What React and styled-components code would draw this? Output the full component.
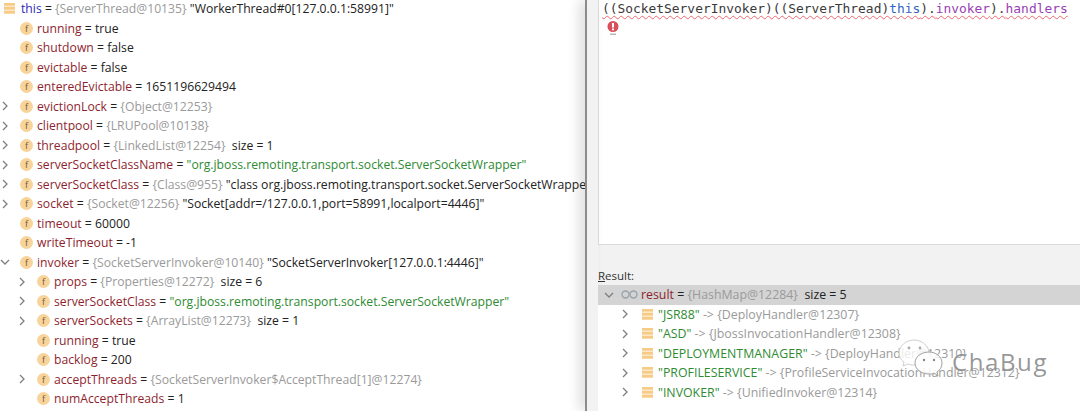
import React from "react";
import styled, { createGlobalStyle } from "styled-components";

const GlobalStyle = createGlobalStyle`
  html, body {
    margin: 0;
    padding: 0;
    background: #fff;
    overflow: hidden;
  }
`;

const Page = styled.div`
  display: flex;
  width: 1080px;
  height: 411px;
  overflow: hidden;
  font-family: "Open Sans", "Liberation Sans", sans-serif;
  font-size: 12.2px;
`;

const TreePane = styled.div`
  width: 585px;
  flex-shrink: 0;
  overflow: hidden;
  background: #fff;
  margin-top: -1px;
`;

const Divider = styled.div`
  position: relative;
  width: 13px;
  flex-shrink: 0;
  background: #f2f2f2;
  border-left: 2px solid #8c8c8c;
  box-sizing: border-box;
  box-shadow: -6px 0 12px rgba(0, 0, 0, 0.13);
`;

const RightPane = styled.div`
  flex: 1;
  min-width: 0;
  display: flex;
  flex-direction: column;
  background: #f2f2f2;
`;

const Editor = styled.div`
  height: 245px;
  flex-shrink: 0;
  box-sizing: border-box;
  background: #fff;
  border-bottom: 1px solid #dcdcdc;
  border-left: 1px solid #dcdcdc;
  padding: 0 0 0 3px;
  overflow: hidden;
`;

const Code = styled.div`
  font-family: "DejaVu Sans Mono", "Liberation Mono", monospace;
  font-size: 12.9px;
  line-height: 17px;
  white-space: nowrap;
  color: #3a3a3a;
  text-decoration: underline wavy #f0686c 1px;
  text-underline-offset: 2px;
`;

const CodeKeyword = styled.span`
  color: #3465c4;
`;

const CodeField = styled.span`
  color: #9a3fb5;
`;

const ErrorMark = styled.div`
  padding: 4px 0 0 5px;
`;

const ResultLabel = styled.div`
  font-size: 11.5px;
  line-height: 16px;
  height: 17px;
  margin-top: 23px;
  flex-shrink: 0;
  color: #333;
`;

const Underlined = styled.span`
  text-decoration: underline;
`;

const ResultList = styled.div`
  flex: 1;
  background: #fff;
  overflow: hidden;
  position: relative;
  font-size: 12.35px;
`;

const Row = styled.div`
  display: flex;
  align-items: center;
  height: 19.5px;
  padding-left: ${(props) => props.$indent}px;
  white-space: nowrap;
  background: ${(props) => (props.$selected ? "#d4d4d4" : "transparent")};
`;

const Chevron = styled.svg`
  width: 10px;
  height: 10px;
  flex-shrink: 0;
  fill: none;
  stroke: #7f7f7f;
  stroke-width: 1.3;
  visibility: ${(props) => (props.$hidden ? "hidden" : "visible")};
`;

const FieldIcon = styled.span`
  display: inline-flex;
  align-items: center;
  justify-content: center;
  width: 13px;
  height: 13px;
  margin: 0 4px 0 10px;
  flex-shrink: 0;
  border-radius: 50%;
  background: #f8d39a;
  color: #6d5a3c;
  font-size: 9px;
  line-height: 13px;
`;

const Name = styled.span`
  color: ${(props) => props.$color || "#8e1f2f"};
`;

const Text = styled.span`
  color: #222;
`;

const Muted = styled.span`
  color: #9a9a9a;
`;

const Str = styled.span`
  color: #2e8b32;
`;

const EntryIcon = styled.svg`
  width: 11px;
  height: 11px;
  margin: 0 5px 0 12px;
  flex-shrink: 0;
`;

const RootIcon = styled(EntryIcon)`
  margin: 0 6px 0 1px;
`;

const WatchIcon = styled.svg`
  width: 17px;
  height: 9px;
  margin: 0 3px 0 7px;
  flex-shrink: 0;
`;

const Watermark = styled.div`
  position: absolute;
  left: 300px;
  top: 54px;
  display: flex;
  align-items: flex-start;
  pointer-events: none;
`;

const WatermarkText = styled.span`
  margin: 8px 0 0 8px;
  font-size: 24px;
  line-height: 30px;
  letter-spacing: 1.6px;
  color: rgba(105, 105, 105, 0.7);
  text-shadow: 0 0 2px #fff;
`;

const Arrow = ({ open, hidden }) => (
  <Chevron viewBox="0 0 10 10" $hidden={hidden}>
    <path d={open ? "M1 3l4 4 4-4" : "M3 1l4 4-4 4"} />
  </Chevron>
);

const Bars = () => (
  <>
    <rect width="11" height="11" fill="#fbe6c6" />
    <path d="M0 0h11v2.5H0zM0 4h11v2.5H0zM0 8h11v2.5H0z" fill="#f7cb85" />
  </>
);

const Field = ({ indent = 1, arrow, open, name, children }) => (
  <Row $indent={indent === 1 ? 0 : 17}>
    <Arrow open={open} hidden={!arrow} />
    <FieldIcon>f</FieldIcon>
    <Name>{name}</Name>
    <Text>&nbsp;=&nbsp;</Text>
    {children}
  </Row>
);

const Entry = ({ name, children }) => (
  <Row $indent={22}>
    <Arrow />
    <EntryIcon viewBox="0 0 11 11">
      <Bars />
    </EntryIcon>
    <Str>"{name}"</Str>
    <Muted>&nbsp;-&gt;&nbsp;{children}</Muted>
  </Row>
);

export default function App() {
  return (
    <Page>
      <GlobalStyle />
      <TreePane>
        <Row $indent={3}>
          <RootIcon viewBox="0 0 11 11">
            <Bars />
          </RootIcon>
          <Name $color="#2a2ab8">this</Name>
          <Text>&nbsp;=&nbsp;</Text>
          <Muted>{"{ServerThread@10135}"}</Muted>
          <Text>&nbsp;"WorkerThread#0[127.0.0.1:58991]"</Text>
        </Row>
        <Field name="running"><Text>true</Text></Field>
        <Field name="shutdown"><Text>false</Text></Field>
        <Field name="evictable"><Text>false</Text></Field>
        <Field name="enteredEvictable"><Text>1651196629494</Text></Field>
        <Field arrow name="evictionLock"><Muted>{"{Object@12253}"}</Muted></Field>
        <Field arrow name="clientpool"><Muted>{"{LRUPool@10138}"}</Muted></Field>
        <Field arrow name="threadpool">
          <Muted>{"{LinkedList@12254}"}</Muted>
          <Text>&nbsp; size = 1</Text>
        </Field>
        <Field arrow name="serverSocketClassName">
          <Str>"org.jboss.remoting.transport.socket.ServerSocketWrapper"</Str>
        </Field>
        <Field arrow name="serverSocketClass">
          <Muted>{"{Class@955}"}</Muted>
          <Text>&nbsp;"class org.jboss.remoting.transport.socket.ServerSocketWrapper"</Text>
        </Field>
        <Field arrow name="socket">
          <Muted>{"{Socket@12256}"}</Muted>
          <Text>&nbsp;"Socket[addr=/127.0.0.1,port=58991,localport=4446]"</Text>
        </Field>
        <Field name="timeout"><Text>60000</Text></Field>
        <Field name="writeTimeout"><Text>-1</Text></Field>
        <Field arrow open name="invoker">
          <Muted>{"{SocketServerInvoker@10140}"}</Muted>
          <Text>&nbsp;"SocketServerInvoker[127.0.0.1:4446]"</Text>
        </Field>
        <Field indent={2} arrow name="props">
          <Muted>{"{Properties@12272}"}</Muted>
          <Text>&nbsp; size = 6</Text>
        </Field>
        <Field indent={2} arrow name="serverSocketClass">
          <Str>"org.jboss.remoting.transport.socket.ServerSocketWrapper"</Str>
        </Field>
        <Field indent={2} arrow name="serverSockets">
          <Muted>{"{ArrayList@12273}"}</Muted>
          <Text>&nbsp; size = 1</Text>
        </Field>
        <Field indent={2} name="running"><Text>true</Text></Field>
        <Field indent={2} name="backlog"><Text>200</Text></Field>
        <Field indent={2} arrow name="acceptThreads">
          <Muted>{"{SocketServerInvoker$AcceptThread[1]@12274}"}</Muted>
        </Field>
        <Field indent={2} name="numAcceptThreads"><Text>1</Text></Field>
      </TreePane>
      <Divider />
      <RightPane>
        <Editor>
          <Code>
            ((SocketServerInvoker)((ServerThread)<CodeKeyword>this</CodeKeyword>).
            <CodeField>invoker</CodeField>).<CodeField>handlers</CodeField>
          </Code>
          <ErrorMark>
            <svg width="12" height="15" viewBox="0 0 12 15" display="block">
              <circle cx="6" cy="5.5" r="5.5" fill="#d9505a" />
              <rect x="5" y="2" width="2" height="4.5" fill="#fff" />
              <rect x="5" y="7.5" width="2" height="1.8" fill="#fff" />
              <rect x="3" y="12.5" width="6" height="1.5" fill="#b9b9b9" />
            </svg>
          </ErrorMark>
        </Editor>
        <ResultLabel>
          <Underlined>R</Underlined>esult:
        </ResultLabel>
        <ResultList>
          <Row $indent={6} $selected>
            <Arrow open />
            <WatchIcon viewBox="0 0 17 9">
              <circle cx="4.5" cy="4.5" r="3.5" fill="none" stroke="#98a4ad" strokeWidth="1.4" />
              <circle cx="12.5" cy="4.5" r="3.5" fill="none" stroke="#98a4ad" strokeWidth="1.4" />
            </WatchIcon>
            <Name>result</Name>
            <Text>&nbsp;=&nbsp;</Text>
            <Muted>{"{HashMap@12284}"}</Muted>
            <Text>&nbsp; size = 5</Text>
          </Row>
          <Entry name="JSR88">{"{DeployHandler@12307}"}</Entry>
          <Entry name="ASD">{"{JbossInvocationHandler@12308}"}</Entry>
          <Entry name="DEPLOYMENTMANAGER">{"{DeployHandler@12310}"}</Entry>
          <Entry name="PROFILESERVICE">{"{ProfileServiceInvocationHandler@12312}"}</Entry>
          <Entry name="INVOKER">{"{UnifiedInvoker@12314}"}</Entry>
          <Watermark>
            <svg width="46" height="40" viewBox="0 0 46 40">
              <path d="M16 1C8 1 1 7 1 14c0 4 2 7 5 9l-1 4 5-2c2 1 4 1 6 1 8 0 15-5 15-12S24 1 16 1z" fill="rgba(255,255,255,0.8)" stroke="#d0d0d0" />
              <path d="M31 13c-8 0-14 5-14 11s6 11 14 11c2 0 3 0 5-1l4 3-1-4c3-2 5-5 5-9 0-6-6-11-13-11z" fill="rgba(255,255,255,0.85)" stroke="#a0a0a0" />
              <circle cx="11" cy="9" r="1.4" fill="#aaa" />
              <circle cx="22" cy="9" r="1.4" fill="#aaa" />
              <circle cx="26" cy="21" r="1.2" fill="#888" />
              <circle cx="36" cy="21" r="1.2" fill="#888" />
            </svg>
            <WatermarkText>ChaBug</WatermarkText>
          </Watermark>
        </ResultList>
      </RightPane>
    </Page>
  );
}
